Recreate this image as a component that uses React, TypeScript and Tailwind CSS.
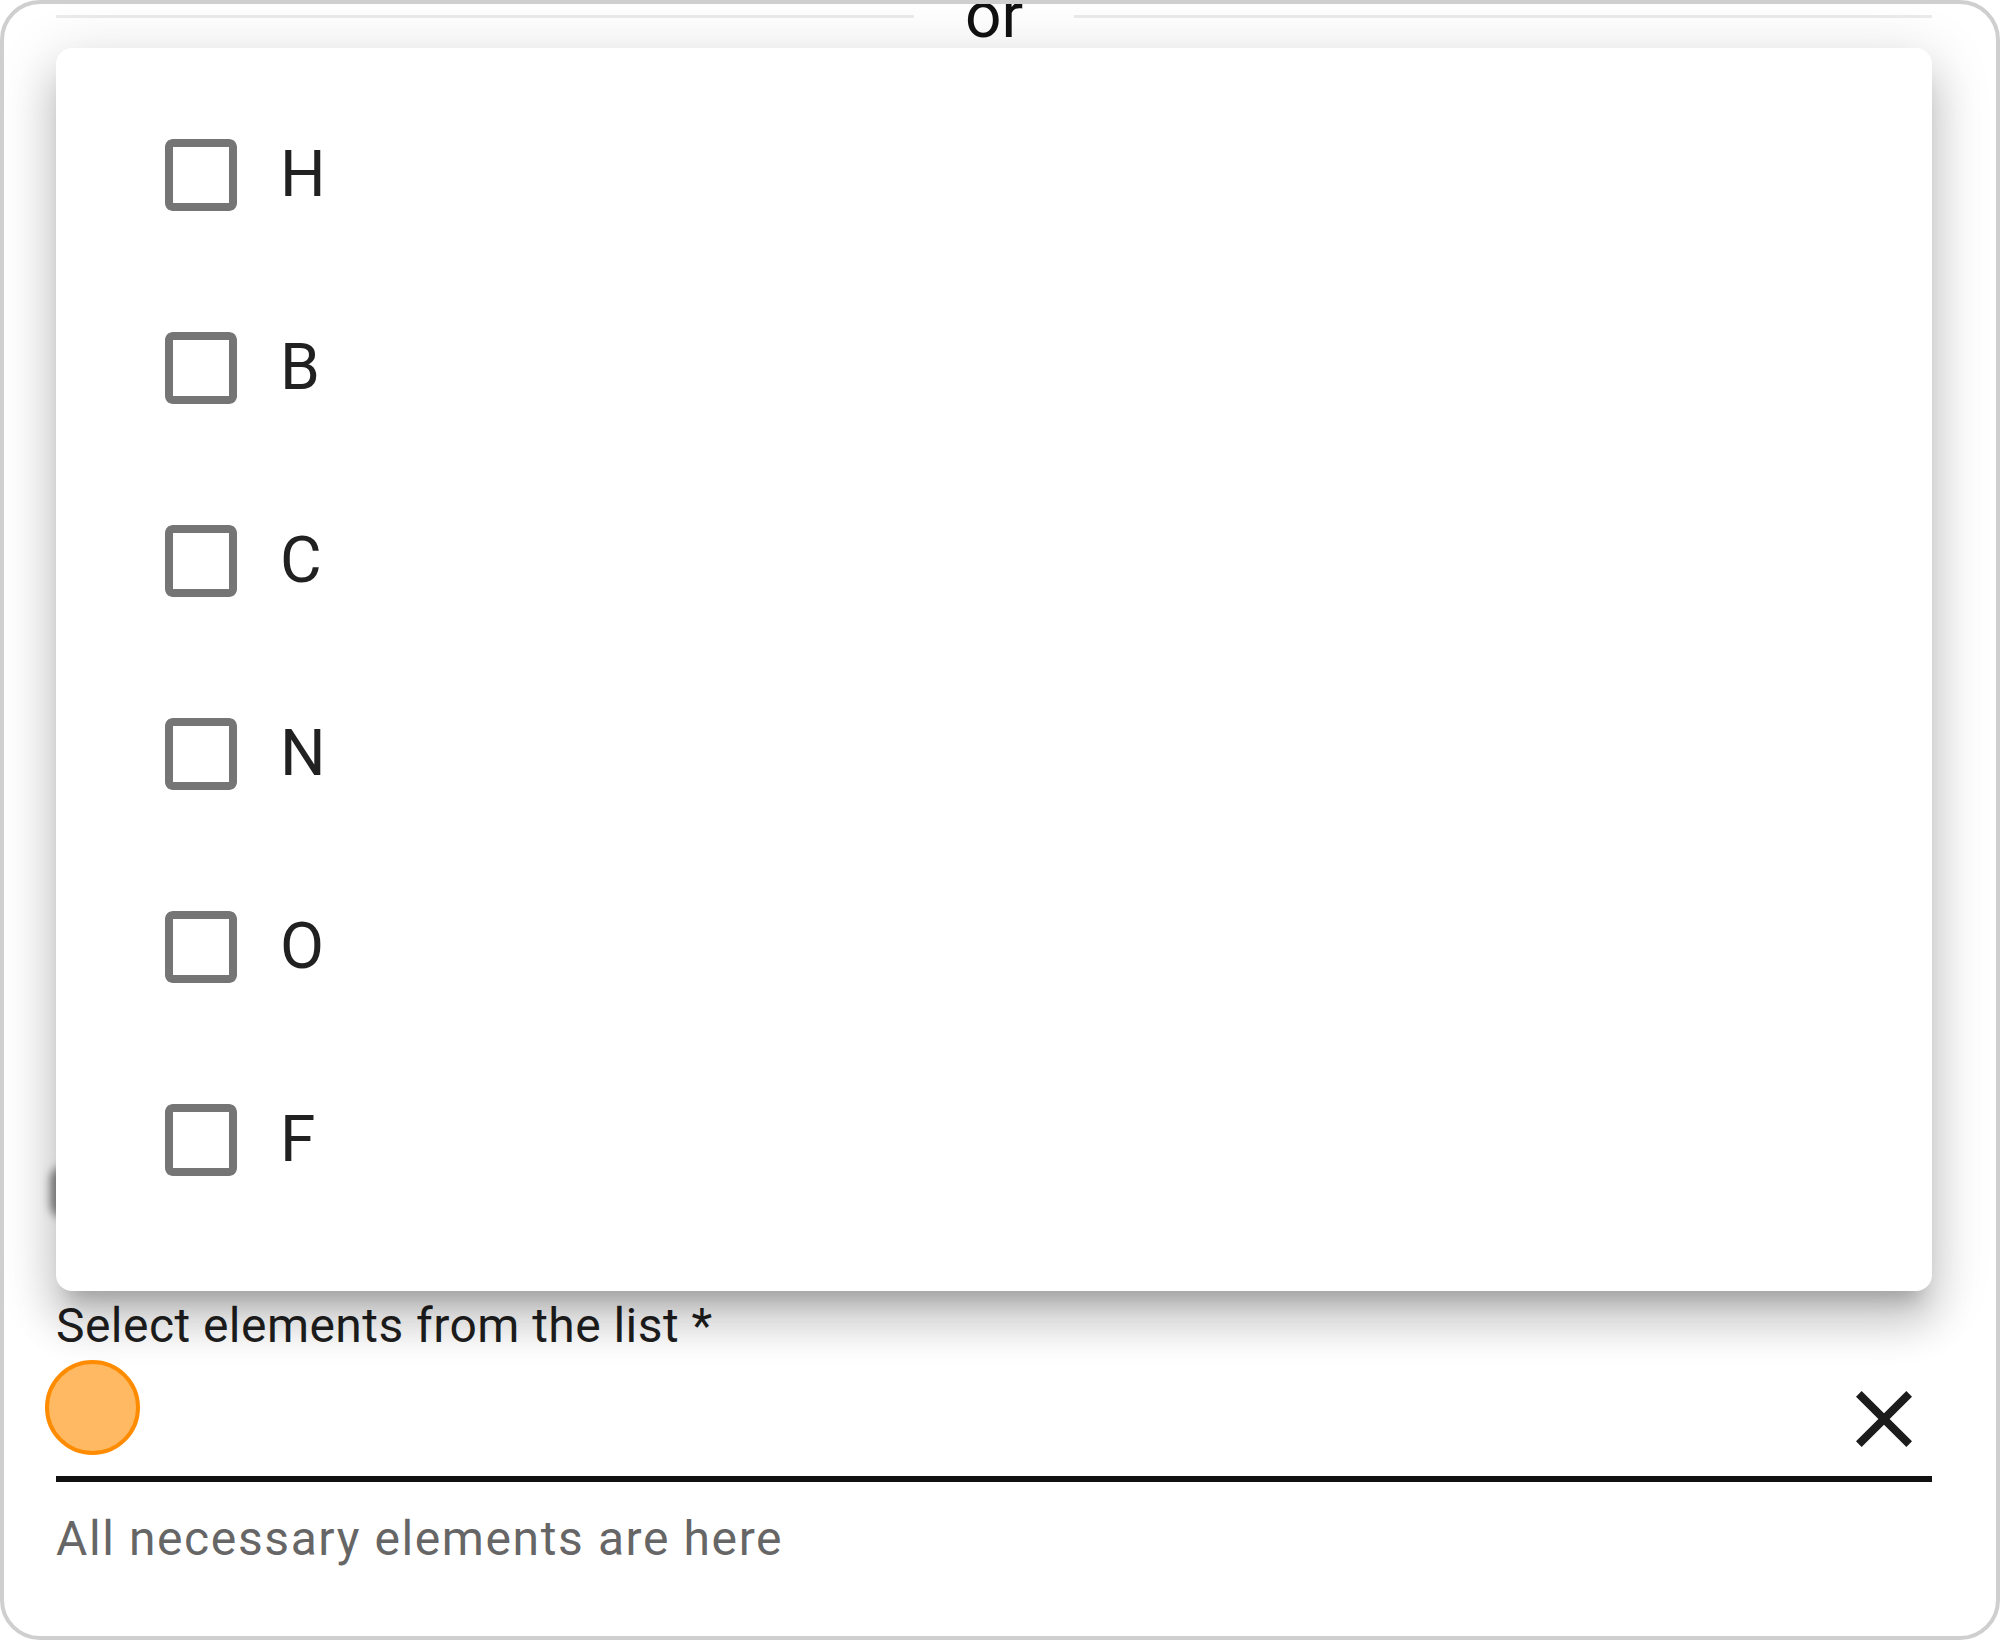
import React from "react";

const OPTIONS = ["H", "B", "C", "N", "O", "F"];

function CheckboxBlank() {
  return (
    <svg viewBox="0 0 24 24" className="h-[96px] w-[96px] shrink-0" fill="#757575">
      <path d="M19 5v14H5V5h14m0-2H5c-1.1 0-2 .9-2 2v14c0 1.1.9 2 2 2h14c1.1 0 2-.9 2-2V5c0-1.1-.9-2-2-2z" />
    </svg>
  );
}

function CloseIcon() {
  return (
    <svg viewBox="0 0 24 24" className="h-[96px] w-[96px]" fill="#1c1c1c">
      <path d="M19 6.41 17.59 5 12 10.59 6.41 5 5 6.41 10.59 12 5 17.59 6.41 19 12 13.41 17.59 19 19 17.59 13.41 12z" />
    </svg>
  );
}

function Option({ label }: { label: string }) {
  return (
    <div className="flex h-[193px] items-center pl-[97px]">
      <CheckboxBlank />
      <span className="ml-[31px] text-[64px] leading-[64px] text-[#212121]">{label}</span>
    </div>
  );
}

export default function App() {
  return (
    <div
      className="relative h-[1640px] w-[2000px] overflow-hidden rounded-[40px] border-4 border-[#cfcfcf] bg-white"
      style={{ fontFamily: "Roboto, 'Liberation Sans', sans-serif" }}
    >
      <div className="pl-[52px] pr-[64px]">
        {/* divider */}
        <div className="-mt-[20px] flex h-[64px] items-center">
          <div className="h-[3px] flex-1 bg-[#ebebeb]" />
          <span className="mx-[51px] text-[64px] leading-[64px] text-[#111]">or</span>
          <div className="h-[3px] flex-1 bg-[#ebebeb]" />
        </div>

        {/* content hidden under the menu */}
        <div className="flex h-[1254px] flex-col justify-end pb-[84px]">
          <div className="-ml-[6px] h-[52px] w-[400px] rounded-[14px] bg-[#8a8a8a] blur-[4px]" />
        </div>

        {/* select field */}
        <div>
          <div className="text-[48px] leading-[48px] tracking-[0.45px] text-[#1f1f1f]">
            Select elements from the list *
          </div>
          <div className="flex h-[126px] items-start justify-between">
            <div className="-ml-[11px] mt-[10px] h-[95px] w-[95px] rounded-full border-4 border-[#ff8c00] bg-[#ffb963]" />
            <div className="mt-[21px]">
              <CloseIcon />
            </div>
          </div>
          <div className="h-[6px] bg-[#111]" />
          <div className="mt-[33px] text-[48px] leading-[48px] tracking-[1.6px] text-[#666]">
            All necessary elements are here
          </div>
        </div>
      </div>

      {/* open menu */}
      <div className="absolute left-[52px] top-[44px] h-[1243px] w-[1876px] rounded-[16px] bg-white pt-[30px] shadow-[0_20px_20px_-12px_rgba(0,0,0,0.2),0_32px_40px_4px_rgba(0,0,0,0.14),0_12px_56px_8px_rgba(0,0,0,0.12)]">
        {OPTIONS.map((o) => (
          <Option key={o} label={o} />
        ))}
      </div>
    </div>
  );
}
